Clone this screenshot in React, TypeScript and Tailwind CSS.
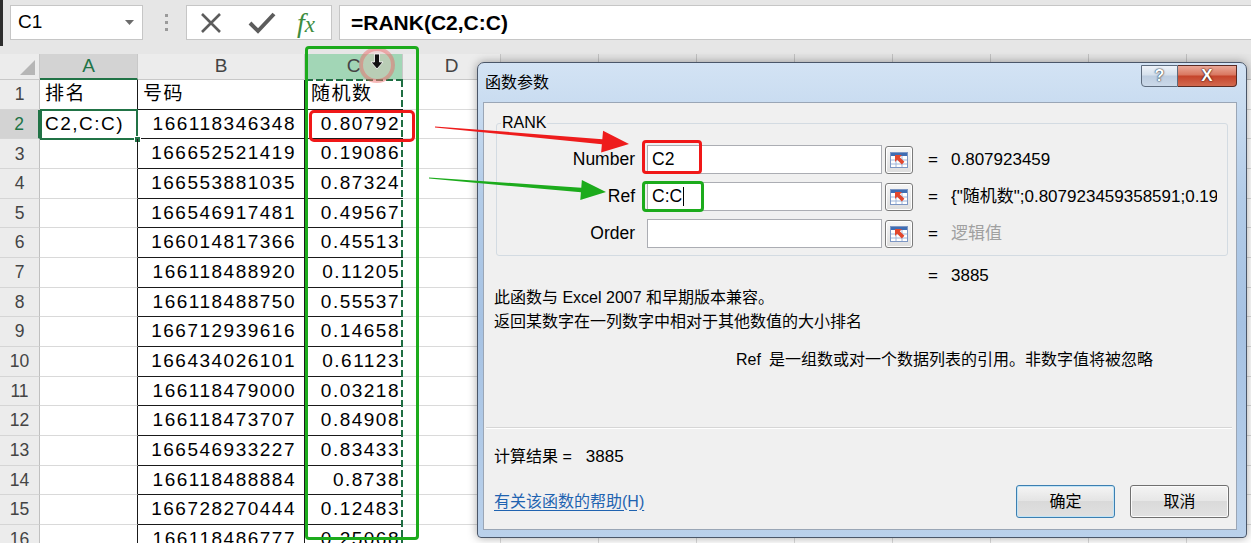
import React from "react";
import clsx from "clsx";

const FONT = "font-['Liberation_Sans','Noto_Sans_CJK_SC',sans-serif]";

interface SheetRow {
  a: string;
  b: string;
  c: string;
}

const rows: SheetRow[] = [
  { a: "排名", b: "号码", c: "随机数" },
  { a: "C2,C:C)", b: "166118346348", c: "0.80792" },
  { a: "", b: "166652521419", c: "0.19086" },
  { a: "", b: "166553881035", c: "0.87324" },
  { a: "", b: "166546917481", c: "0.49567" },
  { a: "", b: "166014817366", c: "0.45513" },
  { a: "", b: "166118488920", c: "0.11205" },
  { a: "", b: "166118488750", c: "0.55537" },
  { a: "", b: "166712939616", c: "0.14658" },
  { a: "", b: "166434026101", c: "0.61123" },
  { a: "", b: "166118479000", c: "0.03218" },
  { a: "", b: "166118473707", c: "0.84908" },
  { a: "", b: "166546933227", c: "0.83433" },
  { a: "", b: "166118488884", c: "0.8738" },
  { a: "", b: "166728270444", c: "0.12483" },
  { a: "", b: "166118486777", c: "0.25068" },
];

// columns behind the dialog; only their header strip shows
const extraCols = ["E", "F", "G", "H", "I", "J", "K", "L"];

// small "collapse dialog" button next to each argument box
const RefButton: React.FC = () => (
  <div className="ml-[3px] w-[28px] h-[28px] shrink-0 flex items-center justify-center rounded-[3px] border border-[#7a7a7a] bg-[linear-gradient(#f6f6f6,#dedede)] shadow-[inset_0_0_0_1px_#ffffff]">
    <svg width="20" height="18" viewBox="0 0 20 18">
      <rect x="1.5" y="1.5" width="17" height="15" fill="#ffffff" stroke="#7d97c4" />
      <rect x="2" y="2" width="16" height="3" fill="#3f6db3" />
      <path d="M2 9h16M2 13h16M7 5v11M13 5v11" stroke="#9fb6da" strokeWidth="1" />
      <path d="M6 4h7l-2.2 2.2 4.6 4.6-2.6 2.6-4.6-4.6L6 11z" fill="#e2472d" />
    </svg>
  </div>
);

interface ArgRowProps {
  label: string;
  input?: React.ReactNode;
  value: React.ReactNode;
}

const ArgRow: React.FC<ArgRowProps> = ({ label, input, value }) => (
  <div className="flex items-center h-[29px]">
    <div className="w-[138px] shrink-0 text-right text-[17.5px]">{label}</div>
    <div className="ml-[12px] w-[235px] h-[29px] shrink-0 flex items-center pl-[4px] bg-white border border-[#abadb3] text-[17.5px]">
      {input}
    </div>
    <RefButton />
    <div className="ml-[15px] w-[10px] text-[17px]">=</div>
    <div className="ml-[13px] w-[266px] overflow-hidden whitespace-nowrap text-[17px]">{value}</div>
  </div>
);

const App: React.FC = () => {
  return (
    <div className={clsx("relative w-[1251px] h-[543px] overflow-hidden bg-white text-black", FONT)}>
      {/* name box + formula bar */}
      <div className="flex items-start h-[54px] bg-[#e6e6e6]">
        <div className="w-[3px] h-[46px] bg-[#2d2d2d]" />
        <div className="ml-[7px] mt-[5px] w-[133px] h-[35px] flex items-center justify-between pl-[7px] pr-[8px] bg-white border border-[#c6c6c6] text-[19px]">
          <span>C1</span>
          <svg width="9" height="5" viewBox="0 0 9 5">
            <path d="M0 0h9L4.5 5z" fill="#6b6b6b" />
          </svg>
        </div>
        <div className="ml-[22px] mt-[14px] flex flex-col gap-[4px]">
          <div className="w-[3px] h-[3px] bg-[#9a9a9a]" />
          <div className="w-[3px] h-[3px] bg-[#9a9a9a]" />
          <div className="w-[3px] h-[3px] bg-[#9a9a9a]" />
        </div>
        <div className="ml-[18px] mt-[5px] w-[146px] h-[35px] flex items-center pl-[13px] bg-white border border-[#c6c6c6]">
          <svg width="22" height="20" viewBox="0 0 22 20">
            <path d="M2 1l18 18M20 1L2 19" stroke="#5c5c5c" strokeWidth="2.6" />
          </svg>
          <svg className="ml-[26px]" width="28" height="22" viewBox="0 0 28 22">
            <path d="M2 11l8 8L26 2" stroke="#5c5c5c" strokeWidth="4" fill="none" />
          </svg>
          <span className="ml-[21px] font-['Liberation_Serif',serif] italic text-[28px] leading-none text-[#3d8c40]">
            f<span className="text-[23px]">x</span>
          </span>
        </div>
        <div className="ml-[7px] mt-[5px] flex-1 h-[35px] flex items-center pl-[11px] bg-white border border-r-0 border-[#c6c6c6] text-[21px] font-bold">
          =RANK(C2,C:C)
        </div>
      </div>

      {/* column headers */}
      <div className="flex h-[26px] text-[19px] text-[#444]">
        <div className="w-[40px] shrink-0 flex items-end justify-end pr-[4px] pb-[4px] bg-[#ececec] border-r border-b border-[#c8c8c8]">
          <svg width="15" height="15" viewBox="0 0 15 15">
            <path d="M15 0v15H0z" fill="#b6b6b6" />
          </svg>
        </div>
        <div className="w-[98px] shrink-0 flex items-center justify-center bg-[#d3d3d3] border-r border-r-[#c8c8c8] border-b-2 border-b-[#217346] text-[#217346]">
          A
        </div>
        <div className="w-[167px] shrink-0 flex items-center justify-center bg-[#ececec] border-r border-b border-[#c8c8c8]">
          B
        </div>
        <div className="w-[98px] shrink-0 flex items-center justify-center bg-[#a2d6b6] border-r border-b border-[#c8c8c8]">
          C
        </div>
        <div className="w-[98px] shrink-0 flex items-center justify-center bg-[#ececec] border-r border-b border-[#c8c8c8]">
          D
        </div>
        {extraCols.map((c) => (
          <div key={c} className="w-[98px] shrink-0 bg-[#e4e4e4] border-r border-b border-[#c2c2c2]" />
        ))}
      </div>

      {/* sheet rows */}
      {rows.map((r, i) => {
        const head = i === 0;
        const active = i === 1;
        return (
          <div key={i} className="flex h-[29.67px]">
            <div
              className={clsx(
                "w-[40px] shrink-0 flex items-center justify-center text-[17.5px] border-b border-b-[#d5d5d5]",
                active
                  ? "bg-[#d3d3d3] text-[#217346] border-r-2 border-r-[#217346]"
                  : "bg-[#ececec] text-[#444] border-r border-r-[#c0c0c0]"
              )}
            >
              {i + 1}
            </div>
            <div className="relative w-[98px] shrink-0 flex items-center pl-[5px] text-[19px] tracking-[1.5px] border-r border-r-[#1a1a1a] border-b border-b-[#d9d9d9]">
              {r.a}
              {active && (
                <div className="absolute left-0 -right-[1px] -top-[1px] -bottom-[2px] border-2 border-[#217346]">
                  <div className="absolute -right-[5px] -bottom-[5px] w-[7px] h-[7px] bg-[#217346] border border-white" />
                </div>
              )}
            </div>
            <div
              className={clsx(
                "w-[167px] shrink-0 flex items-center text-[19px] tracking-[1.5px] border-r border-b border-[#1a1a1a]",
                head ? "pl-[5px]" : "justify-end pr-[8px]"
              )}
            >
              {r.b}
            </div>
            <div
              className={clsx(
                "w-[98px] shrink-0 flex items-center text-[19px] tracking-[1.5px] border-b border-[#1a1a1a]",
                head ? "pl-[6px]" : "justify-end pr-[3px]"
              )}
            >
              {r.c}
            </div>
            <div className="w-[98px] shrink-0 border-r border-b border-[#dadada]" />
            {extraCols.map((c) => (
              <div key={c} className="w-[98px] shrink-0 border-r border-b border-[#dadada]" />
            ))}
          </div>
        );
      })}

      {/* copy marquee around column C */}
      <div className="absolute left-[401px] top-[80px] w-[2px] h-[463px] bg-[repeating-linear-gradient(to_bottom,#1e6e42_0px,#1e6e42_7px,transparent_7px,transparent_10px)]" />
      <div className="absolute left-[306px] top-[79px] w-[97px] h-[2px] bg-[repeating-linear-gradient(to_right,#1e6e42_0px,#1e6e42_7px,transparent_7px,transparent_10px)]" />

      {/* column select cursor */}
      <svg className="absolute left-[355px] top-[43px]" width="44" height="44" viewBox="0 0 44 44">
        <circle cx="22" cy="22" r="16" fill="rgba(255,180,180,0.25)" stroke="rgba(236,100,100,0.45)" strokeWidth="4" />
        <path d="M19.5 11h5v8h3.5l-6 7-6-7h3.5z" fill="#111" stroke="#fff" strokeWidth="0.8" />
      </svg>

      {/* green frame round column C, red frame round C2 */}
      <div className="absolute left-[305px] top-[46px] w-[114px] h-[494px] border-[3px] border-[#1cab1c] rounded-[4px]" />
      <div className="absolute left-[309px] top-[110px] w-[106px] h-[32px] border-[3px] border-[#f01818] rounded-[5px]" />

      {/* 函数参数 dialog */}
      <div className="absolute left-[477px] top-[62px] w-[770px] h-[476px] flex flex-col pl-[5px] pr-[9px] pb-[7px] rounded-t-[7px] rounded-b-[4px] border border-[#4a5668] bg-[linear-gradient(180deg,#d3e3f4_0%,#b3cce8_28%,#a6c2e3_55%,#bad1eb_100%)] shadow-[0_0_10px_rgba(0,0,0,0.35)]">
        <div className="h-[39px] flex items-center pl-[2px] text-[16px]">
          <span>函数参数</span>
          <div className="ml-auto self-start mt-[2px] flex">
            <div className="w-[37px] h-[22px] flex items-center justify-center rounded-bl-[4px] border border-[#5d6b7d] bg-[linear-gradient(#eef3f9,#d5e0ec_45%,#bdcde0_50%,#cbd9e9)] text-[16px] font-bold text-white [text-shadow:0_0_2px_#1d2a3a,0_0_1px_#1d2a3a]">
              ?
            </div>
            <div className="w-[59px] h-[22px] flex items-center justify-center rounded-br-[4px] border border-l-0 border-[#5a2a22] bg-[linear-gradient(#eaa898,#d9775f_45%,#c5442b_50%,#d2694f)] text-[17px] font-bold text-white [text-shadow:0_0_2px_#3a0f08,0_0_1px_#3a0f08]">
              X
            </div>
          </div>
        </div>

        <div className="flex-1 flex flex-col pl-[10px] pr-[7px] pt-[9px] bg-[#f0f0f0] border border-[#9aa6b6]">
          <fieldset className="ml-[2px] w-[732px] h-[144px] border border-[#d3dbe2] rounded-[3px]">
            <legend className="ml-[4px] px-[1px] text-[16px] leading-[22px]">RANK</legend>
            <div className="pt-[11px] flex flex-col gap-[8px]">
              <ArgRow label="Number" input="C2" value="0.807923459" />
              <ArgRow
                label="Ref"
                input={
                  <span className="flex items-center">
                    C:C<span className="ml-[1px] w-px h-[19px] bg-black" />
                  </span>
                }
                value={'{"随机数";0.807923459358591;0.190863719273;0.87324'}
              />
              <ArgRow label="Order" value={<span className="text-[#a0a0a0]">逻辑值</span>} />
            </div>
          </fieldset>

          <div className="mt-[10px] ml-[434px] h-[20px] flex items-center text-[17px]">
            <span className="w-[10px]">=</span>
            <span className="ml-[13px]">3885</span>
          </div>

          <div className="text-[16px] leading-[24px]">
            <div>此函数与 Excel 2007 和早期版本兼容。</div>
            <div>返回某数字在一列数字中相对于其他数值的大小排名</div>
          </div>

          <div className="mt-[14px] ml-[242px] flex text-[16px] leading-[24px]">
            <span className="mr-[8px]">Ref</span>
            <span>是一组数或对一个数据列表的引用。非数字值将被忽略</span>
          </div>

          <div className="mt-[55px] -ml-[8px] w-[746px] h-[2px] border-t border-t-[#d6d6d6] border-b border-b-white" />

          <div className="mt-[18px] h-[20px] flex items-center text-[16px]">
            <span>计算结果 =</span>
            <span className="ml-[14px] text-[17px]">3885</span>
          </div>

          <div className="mt-[18px] h-[33px] flex items-center">
            <span className="text-[16px] text-[#1f63b0] underline underline-offset-[3px]">有关该函数的帮助(H)</span>
            <div className="ml-auto flex gap-[15px]">
              <div className="w-[99px] h-[33px] flex items-center justify-center rounded-[3px] border border-[#3c7fb1] bg-[linear-gradient(#f5f5f5,#e3e3e3_50%,#d9d9d9_50%,#e0e0e0)] shadow-[inset_0_0_0_1px_#c2e4f6] text-[16px]">
                确定
              </div>
              <div className="w-[99px] h-[33px] flex items-center justify-center rounded-[3px] border border-[#707070] bg-[linear-gradient(#f4f4f4,#e6e6e6_50%,#dadada_50%,#e2e2e2)] shadow-[inset_0_0_0_1px_#fbfbfb] text-[16px]">
                取消
              </div>
            </div>
          </div>
        </div>
      </div>

      {/* frames round the Number / Ref boxes */}
      <div className="absolute left-[642px] top-[140px] w-[60px] h-[34px] border-[3px] border-[#f01818] rounded-[4px]" />
      <div className="absolute left-[642px] top-[181px] w-[62px] h-[31px] border-[3px] border-[#1cab1c] rounded-[4px]" />

      {/* pointer arrows from the sheet into the dialog */}
      <svg className="absolute inset-0 pointer-events-none" width="1251" height="543" viewBox="0 0 1251 543">
        <polygon
          points="435.05,126.4 602.32,139.15 603.06,130.68 629,144 601.14,152.6 601.88,144.13 434.95,127.6"
          fill="#ee1c1c"
        />
        <polygon
          points="429.05,177.4 581.26,187.74 581.87,180.06 606,192 580.29,200 580.9,192.32 428.95,178.6"
          fill="#1cab1c"
        />
      </svg>
    </div>
  );
};

export default App;
